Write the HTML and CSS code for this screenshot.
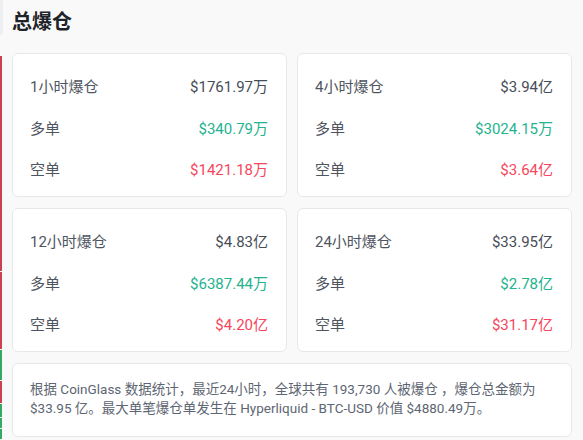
FILE: index.html
```html
<!DOCTYPE html>
<html lang="zh-CN">
<head>
<meta charset="utf-8">
<title>总爆仓</title>
<link rel="stylesheet" href="styles.css">
</head>
<body>
<div class="page">
  <div class="edge">
    <span class="seg seg-cap"></span>
    <span class="seg red h-215"></span>
    <span class="seg red h-49"></span>
    <span class="seg red h-27 flush"></span>
    <span class="seg green h-30"></span>
    <span class="seg red h-22"></span>
    <span class="seg green h-13"></span>
    <span class="seg green h-10"></span>
    <span class="seg green h-10"></span>
  </div>

  <main class="panel">
    <h2 class="title">总爆仓</h2>

    <div class="grid">
      <section class="card">
        <div class="row"><span class="label">1小时爆仓</span><span class="value">$1761.97万</span></div>
        <div class="row"><span class="label">多单</span><span class="value up">$340.79万</span></div>
        <div class="row"><span class="label">空单</span><span class="value down">$1421.18万</span></div>
      </section>
      <section class="card">
        <div class="row"><span class="label">4小时爆仓</span><span class="value">$3.94亿</span></div>
        <div class="row"><span class="label">多单</span><span class="value up">$3024.15万</span></div>
        <div class="row"><span class="label">空单</span><span class="value down">$3.64亿</span></div>
      </section>
      <section class="card">
        <div class="row"><span class="label">12小时爆仓</span><span class="value">$4.83亿</span></div>
        <div class="row"><span class="label">多单</span><span class="value up">$6387.44万</span></div>
        <div class="row"><span class="label">空单</span><span class="value down">$4.20亿</span></div>
      </section>
      <section class="card">
        <div class="row"><span class="label">24小时爆仓</span><span class="value">$33.95亿</span></div>
        <div class="row"><span class="label">多单</span><span class="value up">$2.78亿</span></div>
        <div class="row"><span class="label">空单</span><span class="value down">$31.17亿</span></div>
      </section>
    </div>

    <p class="note">根据 CoinGlass 数据统计，最近24小时，全球共有 193,730 人被爆仓 ，爆仓总金额为 $33.95 亿。最大单笔爆仓单发生在 Hyperliquid - BTC-USD 价值 $4880.49万。</p>
  </main>
</div>
</body>
</html>
```

FILE: styles.css
```css
* {
  box-sizing: border-box;
}

html, body {
  margin: 0;
  padding: 0;
  background: #f9f9f9;
}

body {
  font-family: Roboto, "Noto Sans CJK SC", sans-serif;
  color: #474d57;
  overflow: hidden;
}

.page {
  display: flex;
  align-items: flex-start;
  width: 583px;
  height: 440px;
}

/* sliver of the neighbouring column */
.edge {
  display: flex;
  flex-direction: column;
  gap: 1px;
  width: 3px;
  flex: none;
}

.seg {
  display: block;
  width: 2px;
}

.seg-cap {
  width: 3px;
  height: 35px;
  margin-bottom: 20px;
  background: #eceef0;
  border-bottom-right-radius: 3px;
}

.red { background: #c9424f; }
.green { background: #35a862; }

.flush { margin-top: -1px; }

.h-215 { height: 215px; }
.h-49 { height: 49px; }
.h-27 { height: 28px; }
.h-30 { height: 30px; }
.h-22 { height: 22px; }
.h-13 { height: 13px; }
.h-10 { height: 10px; }

.panel {
  flex: 1;
  padding: 8px 11px 0 9px;
}

.title {
  margin: 0;
  font-size: 20px;
  line-height: 28px;
  font-weight: 700;
  color: #1e2329;
}

.grid {
  margin-top: 17px;
  display: grid;
  grid-template-columns: 1fr 1fr;
  column-gap: 10px;
  row-gap: 11px;
}

.card {
  height: 144px;
  background: #fff;
  border: 1px solid #e6e8ea;
  border-radius: 6px;
  padding: 21px 18px 14px 17px;
  display: flex;
  flex-direction: column;
  gap: 17.5px;
}

.row {
  display: flex;
  justify-content: space-between;
  align-items: center;
  height: 24px;
  font-size: 15px;
  line-height: 24px;
}

.label {
  color: #4f5560;
}

.value {
  color: #474d57;
}

.up { color: #24b38e; }
.down { color: #f6465d; }

.note {
  margin: 11px 0 0;
  height: 74px;
  background: #fff;
  border: 1px solid #e6e8ea;
  border-radius: 6px;
  padding: 16px 12px 0 17px;
  font-size: 13.5px;
  line-height: 18.5px;
  color: #5e6673;
}
```
